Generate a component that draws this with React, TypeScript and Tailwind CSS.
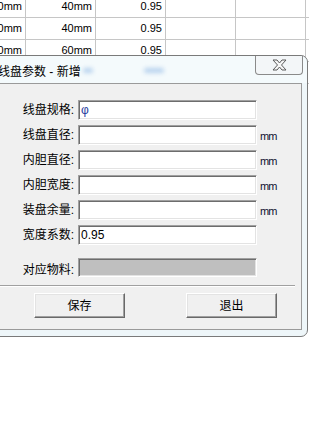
import React from 'react'

const sheetRows = [
  ['500mm', '40mm', '0.95', '', ''],
  ['500mm', '40mm', '0.95', '', ''],
  ['500mm', '60mm', '0.95', '', ''],
  ['500mm', '60mm', '0.95', '', ''],
]

const fields = [
  { label: '线盘规格:', value: 'φ', unit: '' },
  { label: '线盘直径:', value: '', unit: 'mm' },
  { label: '内胆直径:', value: '', unit: 'mm' },
  { label: '内胆宽度:', value: '', unit: 'mm' },
  { label: '装盘余量:', value: '', unit: 'mm' },
  { label: '宽度系数:', value: '0.95', unit: '' },
]

const cjk = "font-['Liberation_Sans','Noto_Sans_CJK_SC',sans-serif]"

function Sheet() {
  return (
    <div className="ml-[-44px] mt-[-4px] font-['Liberation_Sans',sans-serif] text-[11px] text-black">
      {sheetRows.map((row, i) => (
        <div key={i} className="flex h-[22px] border-b border-[#c6c6c6]">
          {row.map((cell, j) => (
            <div
              key={j}
              className="flex w-[70px] shrink-0 items-center justify-end border-r border-[#c6c6c6] pr-[3px]"
            >
              {cell}
            </div>
          ))}
        </div>
      ))}
    </div>
  )
}

function CloseGlyph() {
  return (
    <svg width="15" height="12" viewBox="0 0 15 12">
      <path
        d="M1 1 H5 L7.5 4 L10 1 H14 L9.5 6 L14 11 H10 L7.5 8 L5 11 H1 L5.5 6 Z"
        fill="#f7f7f7"
        stroke="#5b5b5b"
        strokeWidth="1"
        strokeLinejoin="round"
      />
    </svg>
  )
}

function Field({ label, value, unit }: { label: string; value: string; unit: string }) {
  return (
    <div className="flex h-[20px] items-center">
      <div className="w-[75px] shrink-0 text-right text-[12px] leading-none text-black">{label}</div>
      <div className="ml-[4px] flex h-[20px] w-[179px] shrink-0 items-center border border-t-[#a0a0a0] border-l-[#a0a0a0] border-b-white border-r-white bg-white pl-[2px] text-[12px] shadow-[inset_1px_1px_0_#6d6d6d,inset_-1px_-1px_0_#e3e3e3]">
        <span className={value === 'φ' ? 'text-[#1f3c9e]' : 'text-black'}>{value}</span>
      </div>
      {unit && (
        <div className="ml-[3px] mt-[3px] font-['Liberation_Sans',sans-serif] text-[11px] tracking-[-1px] text-[#101030]">
          {unit}
        </div>
      )}
    </div>
  )
}

function Button({ children }: { children: React.ReactNode }) {
  return (
    <button className="flex h-[25px] w-[91px] items-center justify-center border border-t-white border-l-white border-b-[#696969] border-r-[#696969] bg-[#f0f0f0] text-[12px] text-black shadow-[inset_-1px_-1px_0_#a0a0a0,inset_1px_1px_0_#e3e3e3]">
      {children}
    </button>
  )
}

function Dialog() {
  return (
    <div className={`absolute left-[-10px] top-[55px] w-[318px] rounded-tr-[7px] rounded-br-[7px] border border-[#7a7a7a] bg-[#eef6f9] ${cjk}`}>
      {/* title bar */}
      <div className="relative flex h-[27px] items-end rounded-tr-[7px] bg-[#f4fafc] pb-[5px] pl-[7px]">
        <div className="absolute left-[92px] top-[12px] h-[5px] w-[10px] rounded-full bg-[#b8d2ee] blur-[2px]" />
        <div className="absolute left-[153px] top-[12px] h-[5px] w-[20px] rounded-full bg-[#b8d2ee] blur-[2px]" />
        <span className="relative text-[12px] leading-none text-black">线盘参数 - 新增</span>
        <div className="absolute right-[4px] top-0 flex h-[19px] w-[48px] items-center justify-center rounded-b-[4px] border border-t-0 border-[#8a8a8a] bg-[#f3f6f8]">
          <CloseGlyph />
        </div>
      </div>
      {/* client area */}
      <div className="ml-[7px] mr-[5px] w-[304px] border border-[#9a9a9a] bg-[#f0f0f0] pb-[11px] pt-[16px]">
        <div className="flex flex-col gap-[5px]">
          {fields.map((f) => (
            <Field key={f.label} {...f} />
          ))}
        </div>
        <div className="mt-[13px] flex h-[19px] items-center">
          <div className="w-[75px] shrink-0 pt-[4px] text-right text-[12px] leading-none text-black">对应物料:</div>
          <div className="ml-[4px] h-[19px] w-[179px] shrink-0 border border-t-[#a0a0a0] border-l-[#a0a0a0] border-b-white border-r-white bg-[#bfbfbf] shadow-[inset_1px_1px_0_#6d6d6d,inset_-1px_-1px_0_#e3e3e3]" />
        </div>
        <div className="mt-[8px] w-[296px] border-t border-b border-t-[#a0a0a0] border-b-white" />
        <div className="mt-[6px] flex">
          <div className="ml-[35px]">
            <Button>保存</Button>
          </div>
          <div className="ml-[61px]">
            <Button>退出</Button>
          </div>
        </div>
      </div>
      <div className="h-[6px]" />
    </div>
  )
}

export default function App() {
  return (
    <div className="relative h-[422px] w-[309px] overflow-hidden bg-white">
      <Sheet />
      <Dialog />
    </div>
  )
}
